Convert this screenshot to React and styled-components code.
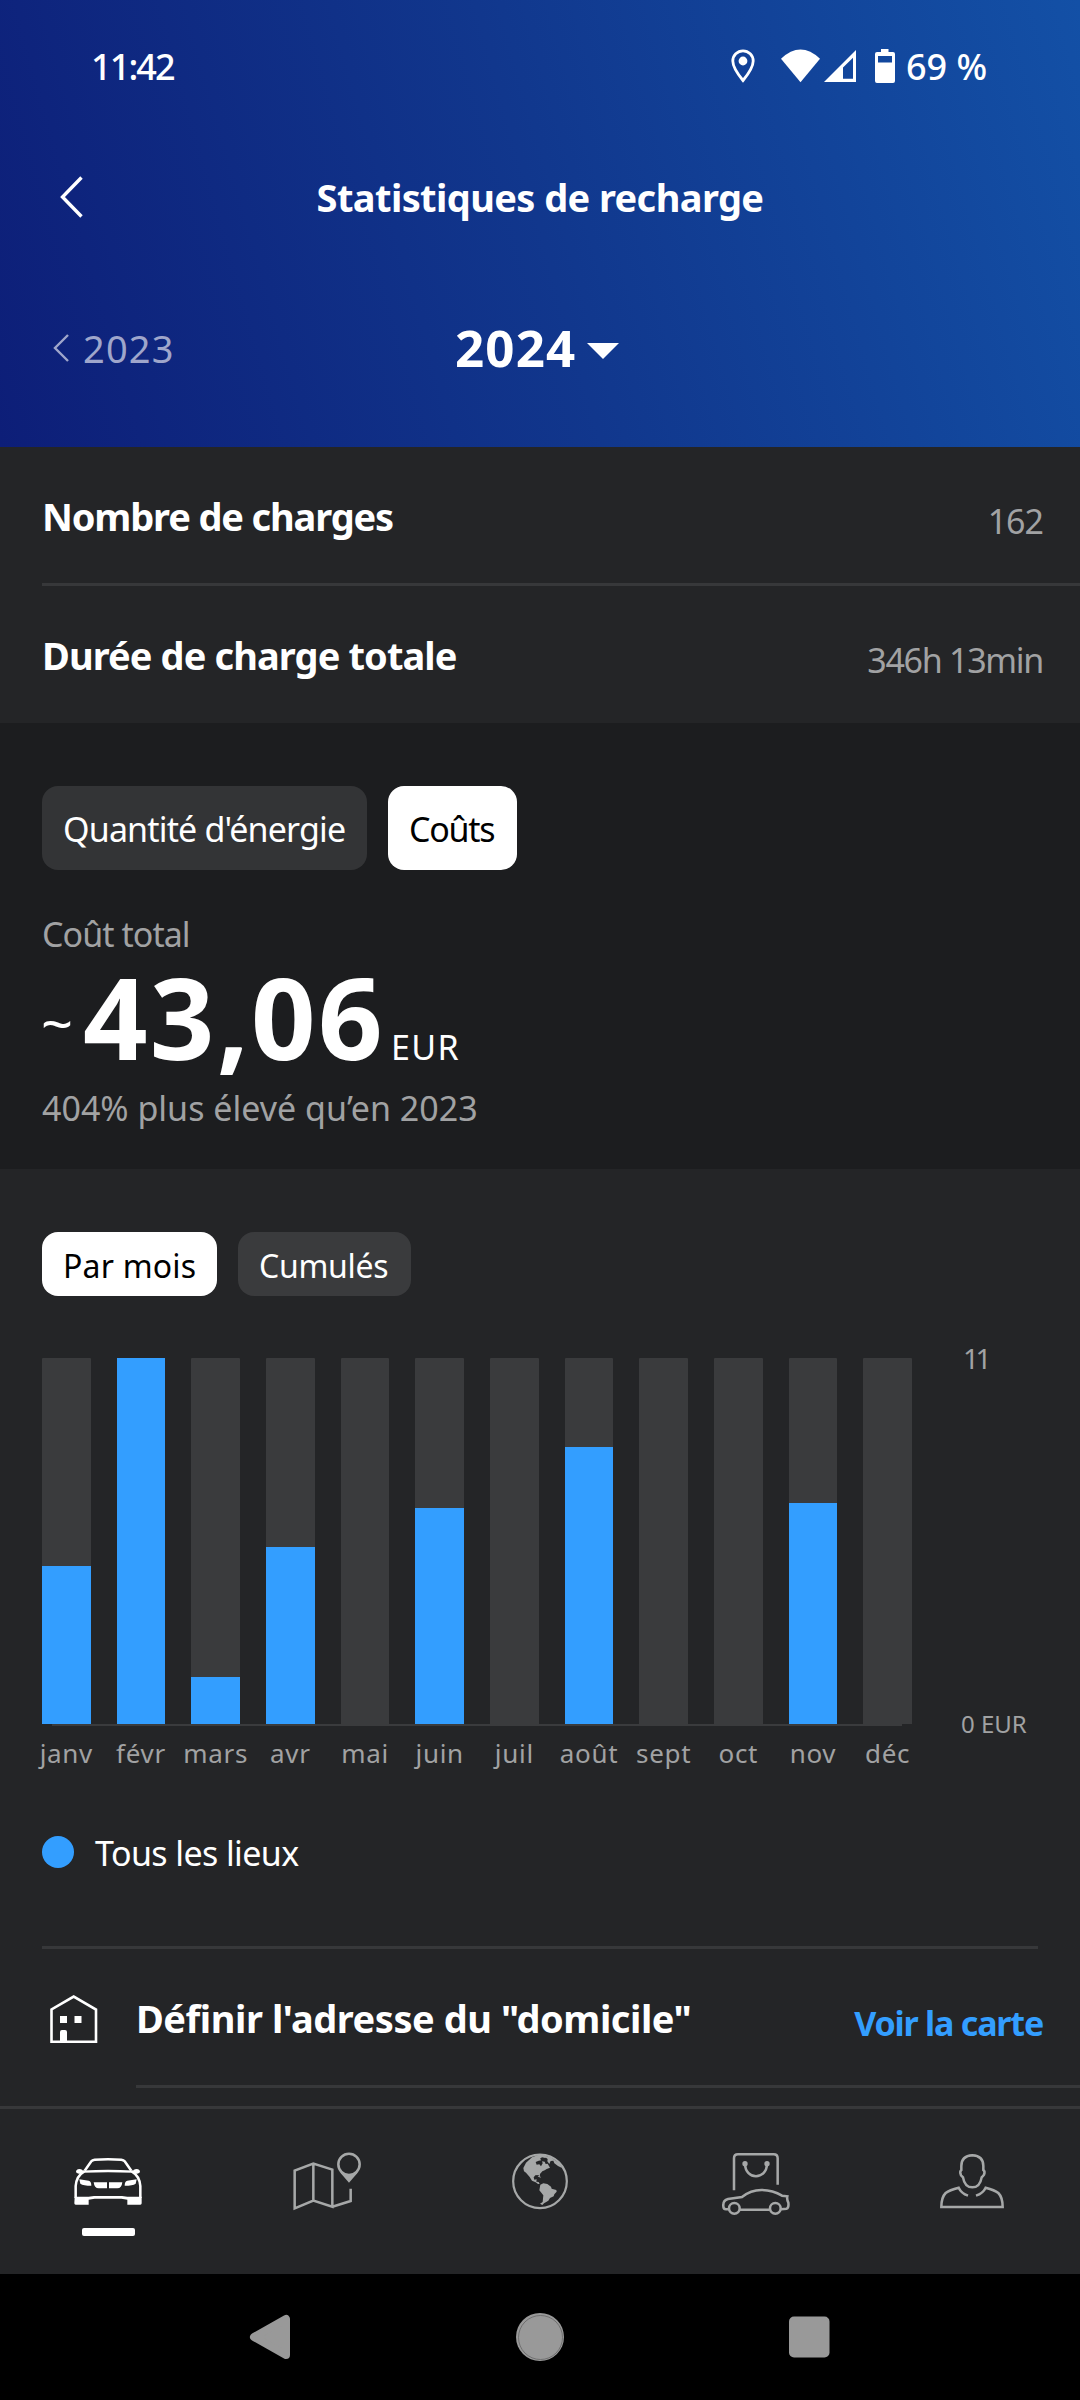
import React from 'react';
import styled, { createGlobalStyle } from 'styled-components';

const GlobalStyle = createGlobalStyle`
	* {
		box-sizing: border-box;
	}

	body {
		margin: 0;
		background: #000;
	}
`;

const Screen = styled.div`
	display: flex;
	flex-direction: column;
	width: 1080px;
	height: 2400px;
	overflow: hidden;
	background: #242527;
	color: #fff;
	font-family: "Noto Sans", "Open Sans", sans-serif;
	white-space: nowrap;
`;

const Text = styled.span`
	font-size: ${p => p.$size || 34}px;
	font-weight: ${p => p.$weight || 400};
	letter-spacing: ${p => p.$ls || 0}px;
	color: ${p => p.$color || 'inherit'};
`;

/* Header */

const Header = styled.header`
	height: 447px;
	flex-shrink: 0;
	background: linear-gradient(74deg, #0d1e78 0%, #11378d 50%, #1350a6 100%);
`;

const StatusBar = styled.div`
	display: flex;
	align-items: center;
	height: 132px;
	padding-left: 91px;
`;

const Clock = styled(Text)`
	width: 640px;
`;

const StatusIcons = styled.div`
	display: flex;
	align-items: center;

	svg:nth-child(2) {
		margin-left: 26px;
	}
	svg:nth-child(3) {
		margin-left: 4px;
	}
	svg:nth-child(4) {
		margin: 0 11px 0 19px;
	}
`;

const TitleBar = styled.div`
	display: grid;
	grid-template-columns: 1fr auto 1fr;
	align-items: center;
	height: 128px;
	padding: 2px 60px 0;
`;

const YearBar = styled.div`
	display: flex;
	align-items: center;
	height: 176px;
	padding-left: 53px;
`;

const PreviousYear = styled.div`
	display: flex;
	align-items: center;
	gap: 14px;
	width: 402px;
	color: #9fa6cb;
`;

const CurrentYear = styled.div`
	display: flex;
	align-items: center;
	gap: 10px;
	padding-bottom: 2px;

	svg {
		margin-top: 8px;
	}
`;

/* Rows with a label and a value */

const Stats = styled.section`
	height: 276px;
	flex-shrink: 0;
	padding-left: 42px;
`;

const Row = styled.div`
	display: flex;
	align-items: center;
	justify-content: space-between;
	flex: 1;
	height: 139px;
	padding: 2px 37px 0 0;
	border-bottom: 3px solid ${p => p.$last ? 'transparent' : '#37383a'};
`;

const Value = styled(Text)`
	padding-top: 10px;
`;

/* Toggle buttons */

const Chips = styled.div`
	display: flex;
	gap: 21px;
`;

const Chip = styled.button`
	width: ${p => p.$width}px;
	height: ${p => p.$height}px;
	padding: 2px 0 0 21px;
	border: none;
	border-radius: 16px;
	background: ${p => p.$active ? '#fff' : p.$bg};
	color: ${p => p.$active ? '#000' : '#fff'};
	font-family: inherit;
	font-size: ${p => p.$size}px;
	letter-spacing: ${p => p.$ls}px;
	text-align: left;
`;

/* Total cost */

const Cost = styled.section`
	height: 446px;
	flex-shrink: 0;
	padding: 63px 42px 0;
	background: #1c1d1f;
`;

const Caption = styled.div`
	margin-top: ${p => p.$top}px;
	font-size: 34px;
	line-height: 44px;
	letter-spacing: ${p => p.$ls || 0}px;
	color: #a1a2a3;
`;

const Amount = styled.div`
	display: flex;
	align-items: baseline;
	height: 121px;
	line-height: 121px;
`;

const Tilde = styled.span`
	align-self: flex-start;
	width: 42px;
	margin-left: -1px;
	font-size: 56px;
	line-height: 132px;
`;

const Figure = styled(Text)`
	width: 308px;
`;

/* Chart */

const ChartSection = styled.section`
	height: 937px;
	flex-shrink: 0;
	padding: 63px 0 0 42px;
	overflow: hidden;
`;

const Chart = styled.div`
	display: flex;
	gap: 49px;
	height: 366px;
	margin-top: 62px;
`;

const Columns = styled.div`
	display: grid;
	grid-template-columns: repeat(12, minmax(0, 1fr));
	column-gap: 26px;
	width: 870px;
`;

const Track = styled.div`
	display: flex;
	align-items: flex-end;
	border-radius: 1px 1px 0 0;
	background: #3a3b3d;
`;

const Bar = styled.div`
	width: 100%;
	background: #339eff;
`;

const Scale = styled.div`
	display: flex;
	flex-direction: column;
	justify-content: space-between;
	margin: -20px 0;
	line-height: 40px;
	color: #a1a2a3;
`;

const ScaleTop = styled(Text)`
	padding-left: 2px;
`;

const Axis = styled.div`
	width: 850px;
	height: 2px;
	margin-left: 10px;
	background: #3a3b3d;
`;

const Months = styled(Columns)`
	margin-top: 9px;
	font-size: 26px;
	line-height: 36px;
	letter-spacing: 0.7px;
	color: #a1a2a3;
`;

const Month = styled.span`
	display: flex;
	justify-content: center;
`;

const Legend = styled.div`
	display: flex;
	align-items: center;
	gap: 21px;
	height: 40px;
	margin-top: 61px;

	${Text} {
		padding-top: 2px;
	}
`;

const Dot = styled.span`
	width: 32px;
	height: 32px;
	border-radius: 50%;
	background: #339eff;
`;

const Divider = styled.div`
	width: 996px;
	height: 3px;
	margin-top: 74px;
	background: #37383a;
`;

const HomeRow = styled.div`
	display: flex;
	align-items: center;
`;

const HomeIcon = styled.div`
	width: 94px;
	height: 50px;
	padding-left: 8px;
`;

/* Bottom bars */

const TabBar = styled.nav`
	display: grid;
	grid-template-columns: repeat(5, 1fr);
	height: 168px;
	flex-shrink: 0;
	padding-top: 37px;
	border-top: 3px solid #37383a;
`;

const Tab = styled.div`
	display: flex;
	flex-direction: column;
	align-items: center;
	color: ${p => p.$active ? '#fff' : '#a6a8a8'};
`;

const Indicator = styled.span`
	width: 53px;
	height: 8px;
	margin-top: 2px;
	border-radius: 2px;
	background: #fff;
`;

const SystemBar = styled.div`
	display: grid;
	grid-template-columns: repeat(3, 270px);
	justify-content: center;
	justify-items: center;
	align-items: center;
	flex: 1;
	background: #000;
`;

const months = [
	['janv', 158], ['févr', 366], ['mars', 47], ['avr', 177], ['mai', 0], ['juin', 216],
	['juil', 0], ['août', 277.5], ['sept', 0], ['oct', 0], ['nov', 221], ['déc', 0],
];

const TabIcon = ({ box, children }) => (
	<svg width="80" height="80" viewBox={box} fill="none" stroke="currentColor" strokeWidth="7.6">
		{children}
	</svg>
);

const CarIcon = () => (
	<TabIcon box="84 108 240 240">
		<path d="M134 182 L154 154 Q157 150 164 149 Q204 146 244 149 Q251 150 254 154 L274 182" />
		<path d="M130 185 Q204 181 278 185" strokeWidth="7" />
		<path d="M133 184 Q109 198 107 228 V264 M275 184 Q299 198 301 228 V264" />
		<path d="M108 185 Q109 177 118 177 Q128 177 131 187 L126 191 Q110 192 108 185 Z M300 185 Q299 177 290 177 Q280 177 277 187 L282 191 Q298 192 300 185 Z" fill="currentColor" stroke="none" />
		<path d="M118 208 L146 212 Q154 214 154 227 Q130 227 121 221 Z M290 208 L262 212 Q254 214 254 227 Q278 227 287 221 Z" fill="currentColor" stroke="none" />
		<path d="M161 217 H201 V235 H176 Q163 235 161 217 Z M247 217 H207 V235 H232 Q245 235 247 217 Z" fill="currentColor" stroke="none" />
		<path d="M104 260 H146 L162 258 H246 L262 260 H305 V280 Q305 284 301 284 H262 V269 L244 266 H164 L146 269 V284 H107 Q103 284 103 280 Z" fill="currentColor" stroke="none" />
	</TabIcon>
);

const MapIcon = () => (
	<TabIcon box="732 108 240 240">
		<path d="M764 295 V182 L820 161 L877 179 V290 L820 272 Z M820 161 V272 M877 290 L932 273 V236" />
		<circle cx="927" cy="163" r="32" />
		<path d="M899 186 Q912 194 927 194 Q942 194 955 186 L927 218 Z" fill="currentColor" stroke="none" />
	</TabIcon>
);

const GlobeIcon = () => (
	<TabIcon box="0 18 240 240">
		<circle cx="120" cy="124" r="80.5" strokeWidth="6.6" />
		<g fill="currentColor" stroke="none">
			<path d="M70 84 L78 68 L96 52 L120 43 L142 47 L136 54 L126 52 L120 56 L124 61 L116 62 L107 66 L110 74 L118 73 L123 79 L128 70 L126 64 L134 65 L137 72 L143 71 L150 83 L140 87 L134 91 L127 94 L120 102 L119 110 L115 105 L106 106 L101 112 L103 119 L110 118 L109 125 L116 126 L119 132 L114 132 L107 127 L96 122 L89 111 L78 98 L72 94 Z" />
			<path d="M132 49 L150 50 L178 70 L186 84 L174 78 L163 70 L160 62 L152 63 L148 72 L142 64 L143 57 Z" />
			<path d="M112 107 L120 109 L123 113 L116 111 Z" />
			<path d="M121 134 L130 130 L142 132 L153 140 L155 146 L169 150 L170 155 L163 163 L161 169 L150 174 L145 182 L132 190 L127 195 L120 191 L128 186 L130 166 L118 151 Z" />
		</g>
	</TabIcon>
);

const StoreIcon = () => (
	<TabIcon box="708 78 240 240">
		<path d="M762 211 V115 Q762 103 774 103 H881 Q893 103 893 115 V194" />
		<path d="M795 131 C796 181 860 181 861 131" />
		<circle cx="795" cy="131" r="8" fill="currentColor" stroke="none" />
		<circle cx="861" cy="131" r="8" fill="currentColor" stroke="none" />
		<path d="M746 268 H738 Q730 268 730 259 Q728 241 744 237 L786 231 Q812 210 844 210 Q878 210 906 227 L922 229 Q920 238 925 248 Q927 263 920 266 L903 268 M780 269 H869" />
		<circle cx="763" cy="265" r="16" />
		<circle cx="886" cy="265" r="16" />
	</TabIcon>
);

const ProfileIcon = () => (
	<TabIcon box="96 48 240 240">
		<path d="M217 76 Q184 78 184 108 L184 120 Q178 124 183 136 Q186 139 189 142 Q194 172 217 172 Q240 172 245 142 Q248 139 252 134 Q256 124 250 120 L250 108 Q250 78 217 76 Z" />
		<path d="M204 197 Q184 190 176 173 Q148 180 137 189 Q124 202 124 231 H308 Q308 202 295 189 Q284 180 257 173 Q249 190 228 197" />
	</TabIcon>
);

export default function App() {
	return <Screen>
		<GlobalStyle />
		<Header>
			<StatusBar>
				<Clock $size={36} $weight={500} $ls={-1.9}>11:42</Clock>
				<StatusIcons>
					<svg width="24" height="34" viewBox="0 0 24 34" fill="none" stroke="#fff" strokeWidth="2.8">
						<path d="M12 31.5 Q1.8 19 1.8 12 A10.2 10.2 0 0 1 22.2 12 Q22.2 19 12 31.5 Z" />
						<circle cx="12" cy="12" r="4.4" fill="#fff" stroke="none" />
					</svg>
					<svg width="39" height="34" viewBox="0 0 39 34" fill="#fff">
						<path d="M0 9.8 Q19.5 -8.6 39 9.8 L19.5 33.2 Z" />
					</svg>
					<svg width="32" height="34" viewBox="0 0 32 34" fill="#fff" fillRule="evenodd">
						<path d="M0 33 L32 1 V33 Z M19 18.5 V29.7 H29 V8.8 Z" />
					</svg>
					<svg width="20" height="34" viewBox="0 0 20 34" fill="#fff" fillRule="evenodd">
						<path d="M6 0 H13.5 V3 H18 Q20 3 20 5 V32 Q20 34 18 34 H2 Q0 34 0 32 V5 Q0 3 2 3 H6 Z M3 7 V13.5 H17 V7 Z" />
					</svg>
					<Text $size={36} $weight={500}>69 %</Text>
				</StatusIcons>
			</StatusBar>
			<TitleBar>
				<svg width="24" height="42" viewBox="0 0 24 42" fill="none" stroke="#fff" strokeWidth="3.4">
					<path d="M21.5 1.5 L2.5 21 L21.5 40.5" />
				</svg>
				<Text $size={38} $weight={700} $ls={-0.6}>Statistiques de recharge</Text>
			</TitleBar>
			<YearBar>
				<PreviousYear>
					<svg width="16" height="28" viewBox="0 0 16 28" fill="none" stroke="currentColor" strokeWidth="2.4">
						<path d="M15 1 L2 14 L15 27" />
					</svg>
					<Text $size={38} $ls={1.2}>2023</Text>
				</PreviousYear>
				<CurrentYear>
					<Text $size={51} $weight={700} $ls={1.2}>2024</Text>
					<svg width="32" height="16" viewBox="0 0 32 16" fill="#fff">
						<path d="M0 0 H32 L16 16 Z" />
					</svg>
				</CurrentYear>
			</YearBar>
		</Header>

		<Stats>
			<Row>
				<Text $size={38} $weight={700} $ls={-1.15}>Nombre de charges</Text>
				<Value $ls={-1} $color="#a1a2a3">162</Value>
			</Row>
			<Row $last>
				<Text $size={38} $weight={700} $ls={-0.9}>Durée de charge totale</Text>
				<Value $ls={-1.3} $color="#a1a2a3">346h 13min</Value>
			</Row>
		</Stats>

		<Cost>
			<Chips>
				<Chip $width={325} $height={84} $size={34} $ls={-0.84} $bg="#333436">Quantité d'énergie</Chip>
				<Chip $width={129} $height={84} $size={34} $ls={-1.3} $active>Coûts</Chip>
			</Chips>
			<Caption $top={42} $ls={-0.95}>Coût total</Caption>
			<Amount>
				<Tilde>~</Tilde>
				<Figure $size={113} $weight={700} $ls={2.2}>43,06</Figure>
				<Text $ls={1.4}>EUR</Text>
			</Amount>
			<Caption $top={9}>404% plus élevé qu’en 2023</Caption>
		</Cost>

		<ChartSection>
			<Chips>
				<Chip $width={175} $height={64} $size={32} $ls={0.2} $active>Par mois</Chip>
				<Chip $width={173} $height={64} $size={32} $ls={-0.3} $bg="#3a3b3d">Cumulés</Chip>
			</Chips>
			<Chart>
				<Columns>
					{ months.map(([name, height]) => <Track key={name}><Bar style={{height}} /></Track>) }
				</Columns>
				<Scale>
					<ScaleTop $size={28} $ls={-3.5}>11</ScaleTop>
					<Text $size={24}>0 EUR</Text>
				</Scale>
			</Chart>
			<Axis />
			<Months>
				{ months.map(([name]) => <Month key={name}>{name}</Month>) }
			</Months>
			<Legend>
				<Dot />
				<Text $ls={-0.6}>Tous les lieux</Text>
			</Legend>
			<Divider />
			<HomeRow>
				<HomeIcon>
					<svg width="48" height="50" viewBox="0 0 48 50" fill="none" stroke="#fff" strokeWidth="2.6">
						<path d="M1.5 47.8 V15.5 L23.7 2.6 L46 15.5 V47.8 Z" />
						<path d="M10 22 H17 V29 H10 Z M24.5 22 H31.5 V29 H24.5 Z M10 48 V38 Q10 36 12 36 H15 Q17 36 17 38 V48 Z" fill="#fff" stroke="none" />
					</svg>
				</HomeIcon>
				<Row>
					<Text $size={38} $weight={700} $ls={-0.45}>Définir l'adresse du "domicile"</Text>
					<Value $weight={700} $ls={-1.2} $color="#339eff">Voir la carte</Value>
				</Row>
			</HomeRow>
		</ChartSection>

		<TabBar>
			<Tab $active>
				<CarIcon />
				<Indicator />
			</Tab>
			<Tab><MapIcon /></Tab>
			<Tab><GlobeIcon /></Tab>
			<Tab><StoreIcon /></Tab>
			<Tab><ProfileIcon /></Tab>
		</TabBar>

		<SystemBar>
			<svg width="42" height="46" viewBox="0 0 42 46" fill="#999" stroke="#999" strokeWidth="8" strokeLinejoin="round">
				<path d="M5 23 L37 5 V41 Z" />
			</svg>
			<svg width="48" height="48" viewBox="0 0 48 48" fill="#999">
				<circle cx="24" cy="24" r="24" />
				<circle cx="24.5" cy="24.5" r="22" fill="none" stroke="#666" strokeWidth="0.8" />
			</svg>
			<svg width="42" height="42" viewBox="0 0 42 42" fill="#999">
				<rect x="0" y="0.5" width="40.5" height="41" rx="5" />
			</svg>
		</SystemBar>
	</Screen>;
}
